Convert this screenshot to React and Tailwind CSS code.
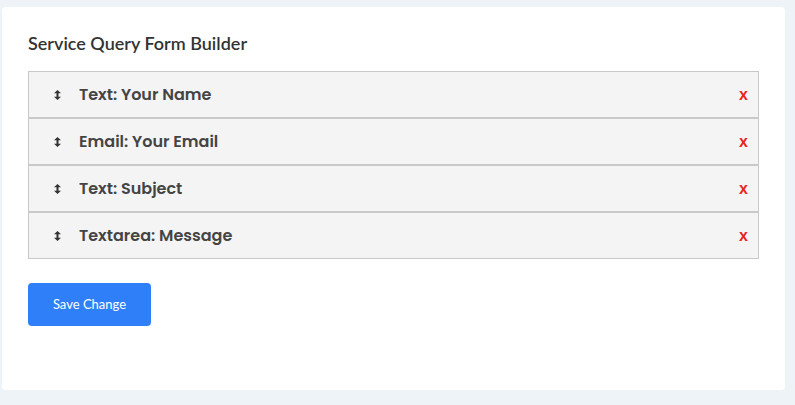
const fields = ['Text: Your Name', 'Email: Your Email', 'Text: Subject', 'Textarea: Message']

const SortIcon = () => (
  <svg width="7" height="10" viewBox="0 0 7 10" aria-hidden="true" className="shrink-0">
    <path d="M3.5 0 L7 3.3 H0 Z M3.5 10 L0 6.7 H7 Z M2.5 3 H4.5 V7 H2.5 Z" fill="#333" />
  </svg>
)

const App = () => (
  <div className="min-h-[405px] bg-[#eef3f7] pl-[2px] pr-[10px] pt-[7px] pb-[15px]">
    <div className="h-[383px] rounded-[4px] bg-white px-[26px] pt-[24px] font-['Lato','Liberation_Sans',sans-serif]">
      <h2 className="text-[18px] font-semibold leading-[24px] text-[#333]">Service Query Form Builder</h2>
      <ul className="mt-[16px] font-['Poppins','Inter','Open_Sans',sans-serif]">
        {fields.map((field) => (
          <li
            key={field}
            className="flex h-[47px] items-center border border-[#c9c9c9] bg-[#f4f4f4] pl-[25px] pr-[10px]"
          >
            <SortIcon />
            <span className="ml-[18px] text-[16px] font-semibold text-[#444]">{field}</span>
            <span className="ml-auto font-['Liberation_Sans',sans-serif] text-[16px] font-bold leading-none text-[#e8261b]">
              x
            </span>
          </li>
        ))}
      </ul>
      <button
        type="button"
        className="mt-[24px] h-[43px] w-[123px] rounded-[4px] bg-[#2f80f8] text-[13px] text-white"
      >
        Save Change
      </button>
    </div>
  </div>
)

export default App
